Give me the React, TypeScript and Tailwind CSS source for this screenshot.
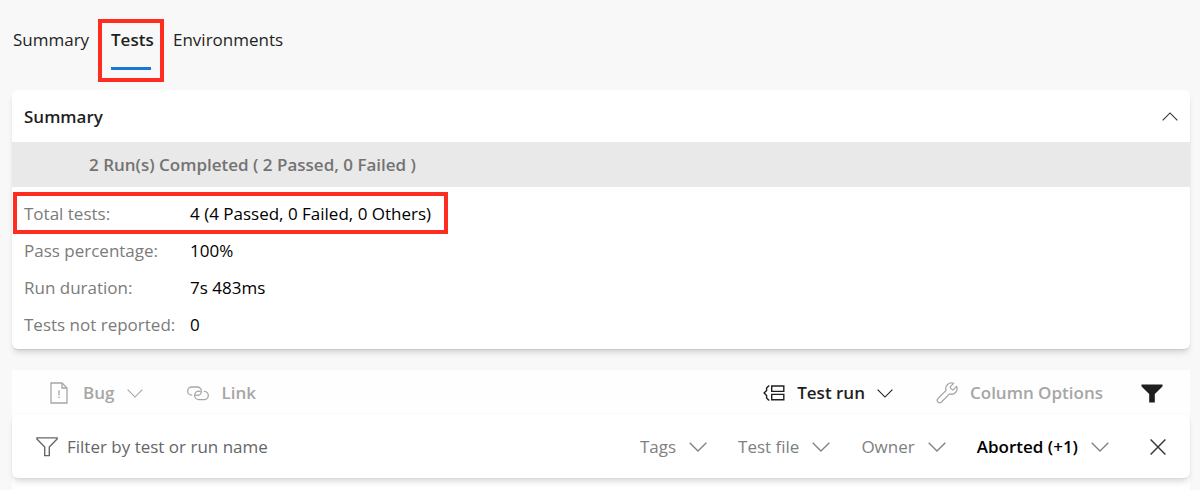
import React, { useState } from "react";

type IconProps = { className?: string };

function Chevron({ className = "" }: IconProps) {
  return (
    <svg viewBox="0 0 18 10" fill="none" stroke="currentColor" strokeWidth="1.3" className={className} aria-hidden="true">
      <path d="M0.7 0.7 9 9 17.3 0.7" />
    </svg>
  );
}

function BugFileIcon() {
  return (
    <svg viewBox="0 0 18 22" fill="none" stroke="currentColor" strokeWidth="1.3" className="h-[22px] w-[18px]" aria-hidden="true">
      <path d="M1 1H12L17 6V21H1Z" />
      <path d="M12 1V6H17" />
      <path d="M9 8.2V13.2M9 14.6V16" />
    </svg>
  );
}

function LinkIcon() {
  return (
    <svg viewBox="0 0 22 15" fill="none" stroke="currentColor" strokeWidth="1.3" strokeLinecap="round" className="h-[15px] w-[22px]" aria-hidden="true">
      <path d="M4.6 9.2A4.1 4.1 0 0 1 5 1H10.2a4.1 4.1 0 0 1 0 8.4C9.4 9.4 9 9.2 8.8 9" />
      <path d="M17.4 5.4A4.1 4.1 0 0 1 17 13.6H11.8a4.1 4.1 0 0 1 0-8.4C12.6 5.2 13 5.4 13.2 5.6" />
    </svg>
  );
}

function GroupIcon() {
  return (
    <svg viewBox="0 0 22 16" fill="none" stroke="currentColor" strokeWidth="1.4" className="h-4 w-[22px]" aria-hidden="true">
      <path d="M6.4 0.9H5.6L3.6 3V5.4L1.1 8L3.6 10.6V13L5.6 15.1H6.4" />
      <path d="M8.7 1H20.8V6.4H8.7ZM8.7 9.4H20.8V14.8H8.7Z" />
    </svg>
  );
}

function WrenchIcon() {
  return (
    <svg viewBox="0 0 22 22" fill="none" stroke="currentColor" strokeWidth="1.3" strokeLinejoin="round" className="size-[22px]" aria-hidden="true">
      <path d="M17.6 1.4A5.6 5.6 0 0 0 10.1 8.4L1.7 16.8A2.5 2.5 0 0 0 5.2 20.3L13.6 11.9A5.6 5.6 0 0 0 20.6 4.4L17.6 7.4C16.2 8.6 13.4 5.8 14.6 4.4Z" />
    </svg>
  );
}

function FunnelIcon() {
  return (
    <svg viewBox="0 0 22 20" fill="none" stroke="currentColor" strokeWidth="1.4" className="h-5 w-[22px]" aria-hidden="true">
      <path d="M0.9 0.9H21.1V2L13.3 10V18.6H8.7V10L0.9 2Z" />
    </svg>
  );
}

function FunnelSolidIcon() {
  return (
    <svg viewBox="0 0 22 19" fill="currentColor" className="h-[19px] w-[22px]" aria-hidden="true">
      <path d="M0.5 0.5H21.5V2.5L13.8 10V18.5H8.2V10L0.5 2.5Z" />
    </svg>
  );
}

function CloseIcon() {
  return (
    <svg viewBox="0 0 16 16" fill="none" stroke="currentColor" strokeWidth="1.4" className="size-4" aria-hidden="true">
      <path d="M0.6 0.6 15.4 15.4M15.4 0.6 0.6 15.4" />
    </svg>
  );
}

const stats = [
  { label: "Total tests:", value: "4 (4 Passed, 0 Failed, 0 Others)", marked: true },
  { label: "Pass percentage:", value: "100%" },
  { label: "Run duration:", value: "7s 483ms" },
  { label: "Tests not reported:", value: "0" },
];

const filters = [
  { label: "Tags" },
  { label: "Test file" },
  { label: "Owner" },
  { label: "Aborted (+1)", active: true },
];

export default function App() {
  const [open, setOpen] = useState(true);
  const [query, setQuery] = useState("");

  return (
    <div className="min-h-screen bg-[#f8f8f8] pr-2.5 pl-3 font-['Open_Sans',sans-serif] text-[17px] leading-6 text-[#1f1f1f]">
      <nav className="flex h-[90px] items-start pt-7 pl-px">
        <a href="#summary" className="w-[98px]">Summary</a>
        <a href="#tests" className="relative w-[62px] font-semibold" aria-current="page">
          Tests
          <span className="mt-[15px] block h-[3px] w-10 bg-[#1878d4]" />
          <span className="pointer-events-none absolute -top-[9px] -left-[13px] h-[63px] w-[66px] border-4 border-[#ff2d20]" />
        </a>
        <a href="#environments">Environments</a>
      </nav>

      <section className="rounded-md bg-white shadow-[0_5px_6px_-2px_rgba(0,0,0,0.16),0_1px_1px_rgba(0,0,0,0.08)]">
        <header className="flex h-13 items-center justify-between pr-3 pl-3">
          <h2 className="pt-0.5 font-semibold">Summary</h2>
          <button type="button" aria-label="Toggle summary" aria-expanded={open} onClick={() => setOpen(!open)} className="text-[#333]">
            <Chevron className="h-[9px] w-4 rotate-180" />
          </button>
        </header>
        {open && (
          <>
            <p className="flex h-[45px] items-center bg-[#e9e9e9] pl-[77px] font-semibold text-[#737373]">
              2 Run(s) Completed ( 2 Passed, 0 Failed )
            </p>
            <dl className="pt-2 pb-1.5">
              {stats.map((s) => (
                <div key={s.label} className="relative flex h-[37px] items-center pl-3">
                  <dt className="w-[166px] text-[#7b7b7b]">{s.label}</dt>
                  <dd className="text-black">{s.value}</dd>
                  {s.marked && (
                    <span className="pointer-events-none absolute -top-[3px] left-px h-[42px] w-[435px] border-4 border-[#ff2d20]" />
                  )}
                </div>
              ))}
            </dl>
          </>
        )}
      </section>

      <section className="mt-[21px] bg-[#fefefe]">
        <div className="flex h-11 items-center pt-0.5 pr-[27px] pl-[38px] font-semibold">
          <button type="button" className="flex items-center text-[#a6a6a6]">
            <BugFileIcon />
            <span className="ml-[15px]">Bug</span>
            <Chevron className="ml-[13px] h-[9px] w-4" />
          </button>
          <button type="button" className="ml-11 flex items-center text-[#a6a6a6]">
            <LinkIcon />
            <span className="ml-3">Link</span>
          </button>
          <button type="button" className="ml-auto flex items-center">
            <GroupIcon />
            <span className="ml-3">Test run</span>
            <Chevron className="ml-3 h-[9px] w-4" />
          </button>
          <button type="button" className="ml-[43px] flex items-center text-[#a6a6a6]">
            <WrenchIcon />
            <span className="ml-3">Column Options</span>
          </button>
          <button type="button" aria-label="Toggle filters" className="ml-[38px]">
            <FunnelSolidIcon />
          </button>
        </div>

        <div className="relative flex h-16 items-center rounded-md bg-white pt-0.5 pr-6 pl-6 shadow-[0_5px_6px_-2px_rgba(0,0,0,0.16),0_0_2px_rgba(0,0,0,0.07)]">
          <label className="flex min-w-0 flex-1 items-center text-[#666]">
            <FunnelIcon />
            <input
              type="text"
              aria-label="Filter by test or run name"
              placeholder="Filter by test or run name"
              value={query}
              onChange={(e) => setQuery(e.target.value)}
              className="ml-[9px] min-w-0 flex-1 bg-transparent outline-none placeholder:text-[#666]"
            />
          </label>
          <div className="flex items-center gap-[31px]">
            {filters.map((f) => (
              <button
                key={f.label}
                type="button"
                className={f.active ? "flex items-center gap-[13px] font-semibold text-black" : "flex items-center gap-[13px] text-[#808080]"}
              >
                {f.label}
                <Chevron className="h-2.5 w-[18px] text-[#808080]" />
              </button>
            ))}
          </div>
          <button type="button" aria-label="Clear filters" className="ml-[41px] text-[#333]">
            <CloseIcon />
          </button>
        </div>
        <div className="h-3" />
      </section>
    </div>
  );
}
